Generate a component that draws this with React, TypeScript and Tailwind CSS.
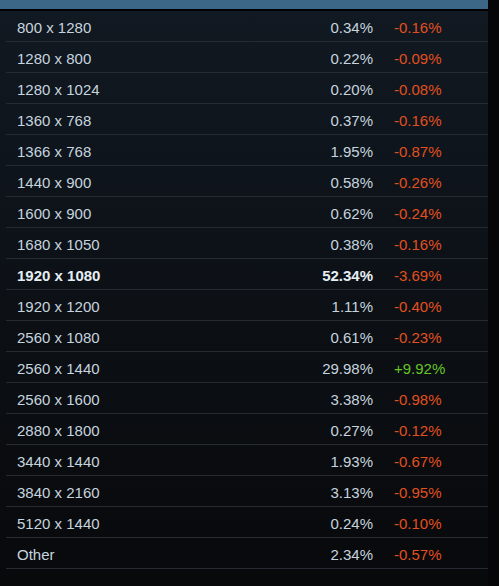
const rows = [
  { res: "800 x 1280", pct: "0.34%", change: "-0.16%" },
  { res: "1280 x 800", pct: "0.22%", change: "-0.09%" },
  { res: "1280 x 1024", pct: "0.20%", change: "-0.08%" },
  { res: "1360 x 768", pct: "0.37%", change: "-0.16%" },
  { res: "1366 x 768", pct: "1.95%", change: "-0.87%" },
  { res: "1440 x 900", pct: "0.58%", change: "-0.26%" },
  { res: "1600 x 900", pct: "0.62%", change: "-0.24%" },
  { res: "1680 x 1050", pct: "0.38%", change: "-0.16%" },
  { res: "1920 x 1080", pct: "52.34%", change: "-3.69%", bold: true },
  { res: "1920 x 1200", pct: "1.11%", change: "-0.40%" },
  { res: "2560 x 1080", pct: "0.61%", change: "-0.23%" },
  { res: "2560 x 1440", pct: "29.98%", change: "+9.92%" },
  { res: "2560 x 1600", pct: "3.38%", change: "-0.98%" },
  { res: "2880 x 1800", pct: "0.27%", change: "-0.12%" },
  { res: "3440 x 1440", pct: "1.93%", change: "-0.67%" },
  { res: "3840 x 2160", pct: "3.13%", change: "-0.95%" },
  { res: "5120 x 1440", pct: "0.24%", change: "-0.10%" },
  { res: "Other", pct: "2.34%", change: "-0.57%" },
];

export default function App() {
  return (
    <div className="flex h-[586px] w-[499px] bg-[#060608] font-['Liberation_Sans',Arial,sans-serif] text-[15px]">
      <div className="flex w-[488px] flex-col bg-gradient-to-b from-[#111922] to-[#08090b]">
        <div className="h-[9px] bg-[#3d6787]" />
        <div className="h-[2px] bg-black" />
        <div className="pl-[6px]">
          {rows.map((r) => (
            <div
              key={r.res}
              className={`flex h-[31px] items-center border-b border-[#262b31] pt-[4px] ${
                r.bold ? "font-bold text-[#e6eef4]" : "text-[#c6d4df]"
              }`}
            >
              <span className="pl-[11px]">{r.res}</span>
              <span className="ml-auto w-[100px] text-right">{r.pct}</span>
              <span
                className={`ml-[21px] w-[94px] font-normal ${
                  r.change.startsWith("+") ? "text-[#66c428]" : "text-[#e2501f]"
                }`}
              >
                {r.change}
              </span>
            </div>
          ))}
        </div>
      </div>
    </div>
  );
}
